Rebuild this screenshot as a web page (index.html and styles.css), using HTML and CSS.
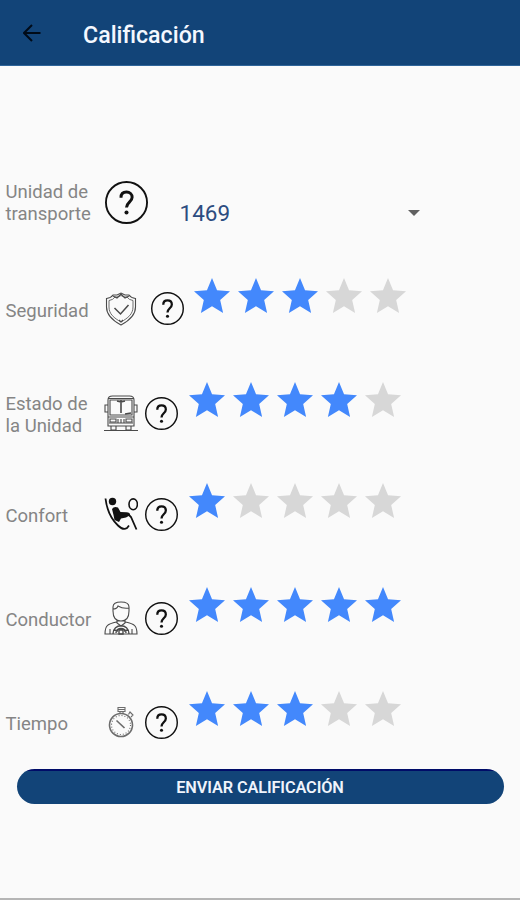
FILE: index.html
```html
<!DOCTYPE html>
<html lang="es">
<head>
<meta charset="utf-8">
<title>Calificación</title>
<link rel="stylesheet" href="styles.css">
</head>
<body>
<svg class="defs" width="0" height="0" aria-hidden="true">
  <symbol id="star" viewBox="2 2 20 19" preserveAspectRatio="none"><path d="M12 17.27 18.18 21l-1.64-7.03L22 9.24l-7.19-.61L12 2 9.19 8.63 2 9.24l5.46 4.73L5.82 21z"/></symbol>
  <symbol id="help" viewBox="0 0 32 32"><g fill="none" stroke="currentColor"><circle cx="16" cy="16" r="15.3" stroke-width="1.4"/><path d="M11.9 12.4C11.900 9.700 13.500 8.200 16 8.200s4.200 1.600 4.200 3.900c0 3.600-4.200 3.800-4.200 7.700" stroke-width="2.200"/></g><circle cx="16" cy="23.500" r="1.500" fill="currentColor"/></symbol>
</svg>
<header class="bar">
  <svg class="back" viewBox="0 0 18 18"><path d="M17.5 9H1.5M9 1 1 9l8 8"/></svg>
  <h1>Calificación</h1>
</header>
<main>
  <div class="row unit">
    <span class="label">Unidad de<br>transporte</span>
    <svg class="help big"><use href="#help"/></svg>
    <div class="select"><span>1469</span><i class="caret"></i></div>
  </div>
  <div class="row safety">
    <span class="label">Seguridad</span>
    <svg class="icon" viewBox="0 0 34 34"><g class="line"><path d="M2.5 6.5Q7 6 9 3h4l4-2 4 2h4q2 3 6.500 3.500V15c0 9-7 14-14.500 18C9.500 29 2.500 24 2.500 15z"/><path d="M5 8.500Q9 8 11 5h3l3-1.500L20 5h3q2 3 6 3.500V15c0 7-5 11-12 15C10 26 5 22 5 15z" stroke-width=".8"/><path d="m10.500 16 6 6 8-9" stroke-width="1.500"/></g><path d="m9 4 4 2 4-4 4 4 4-2M15 28l2 2 2-2" class="line"/></svg>
    <svg class="help"><use href="#help"/></svg>
    <div class="stars"><svg class="on"><use href="#star"/></svg><svg class="on"><use href="#star"/></svg><svg class="on"><use href="#star"/></svg><svg><use href="#star"/></svg><svg><use href="#star"/></svg></div>
  </div>
  <div class="row state">
    <span class="label">Estado de<br>la Unidad</span>
    <svg class="icon" viewBox="0 0 34 36"><g class="line"><path d="M4 31V5Q4 1 8.500 1h17Q30 1 30 5v26zM6 20V5h22v15zM4.500 3.500h25M4.500 22h25M5 28h24M7 31v4h5v-4M22 31v4h5v-4M0 35.500h34"/><path d="M4 10H1v7h3M30 10h3v7h-3M6 24h6v3H6zM22 24h6v3h-6zM14 24v4M17 24v4M20 24v4"/><path d="M17 5v13M13 6l4 1 4-1M21 19l6-1" stroke-width="1.600"/></g></svg>
    <svg class="help"><use href="#help"/></svg>
    <div class="stars"><svg class="on"><use href="#star"/></svg><svg class="on"><use href="#star"/></svg><svg class="on"><use href="#star"/></svg><svg class="on"><use href="#star"/></svg><svg><use href="#star"/></svg></div>
  </div>
  <div class="row comfort">
    <span class="label">Confort</span>
    <svg class="icon solid" viewBox="0 0 34 34"><circle cx="8.500" cy="4.500" r="3.700"/><path d="M8 12q2-3 6-1.500l2.500 4.500 6 .200q4 .500 3.500 3l-4 2.300-5 1-2 3.500-4.500-2-1-5z"/><g fill="none" stroke="currentColor"><path d="M1.500 1.500C3 14 7 22 14 28.500q5 5 9 2.500l2-2.500" stroke-width="1.800"/><path d="m24 17 3 3 5.500 12.500" stroke-width="1.800"/><ellipse cx="29.200" cy="7.300" rx="4.200" ry="5.400" stroke-width="1.600"/></g></svg>
    <svg class="help"><use href="#help"/></svg>
    <div class="stars"><svg class="on"><use href="#star"/></svg><svg><use href="#star"/></svg><svg><use href="#star"/></svg><svg><use href="#star"/></svg><svg><use href="#star"/></svg></div>
  </div>
  <div class="row driver">
    <span class="label">Conductor</span>
    <svg class="icon" viewBox="0 0 34 34"><g class="line"><path d="M9 10V6q0-5 8-5t8 5v4q0 10-8 10T9 10zM9 8q4 0 5-3 5 3 11 2M13 19v3l4 3 4-3v-3M12.500 21C4 23 1 24 1 33h32c0-9-3-10-11.500-12M6 28v5M28 28v5"/><path d="M9 33c0-11 16-11 16 0M12 32c0-6 10-6 10 0M10 29l4 1M24 29l-4 1M15 29h4v4h-4z" stroke-width="1.400"/></g></svg>
    <svg class="help"><use href="#help"/></svg>
    <div class="stars"><svg class="on"><use href="#star"/></svg><svg class="on"><use href="#star"/></svg><svg class="on"><use href="#star"/></svg><svg class="on"><use href="#star"/></svg><svg class="on"><use href="#star"/></svg></div>
  </div>
  <div class="row time">
    <span class="label">Tiempo</span>
    <svg class="icon" viewBox="0 0 34 34"><g class="line"><circle cx="17" cy="20" r="11.500" stroke-width="1.600"/><circle cx="17" cy="20" r="9.500" stroke-dasharray="1 2"/><path d="M14 2.500h7v4h-7zM16 6.500v2M19 6.500v2M14 4.500h7M24.500 9.500 26 7l3 3-2 2"/><path d="m12.500 15.500 8 7.500" stroke-width="1.700"/></g></svg>
    <svg class="help"><use href="#help"/></svg>
    <div class="stars"><svg class="on"><use href="#star"/></svg><svg class="on"><use href="#star"/></svg><svg class="on"><use href="#star"/></svg><svg><use href="#star"/></svg><svg><use href="#star"/></svg></div>
  </div>
  <button class="send">ENVIAR CALIFICACIÓN</button>
</main>
</body>
</html>
```
FILE: styles.css
```css
* { box-sizing: border-box; }
body {
  margin: 0;
  height: 900px;
  display: flex;
  flex-direction: column;
  background: #fafafa;
  border-bottom: 2px solid #b5b5b5;
  font-family: Roboto, "Liberation Sans", sans-serif;
}
.defs { display: none; }
svg { display: block; flex: none; }
.bar {
  height: 66px;
  display: flex;
  align-items: center;
  padding: 1px 0 0 23px;
  background: #124478;
  border-bottom: 1px solid #2f659a;
}
.back { width: 18px; height: 18px; fill: none; stroke: #000b18; stroke-width: 2; }
h1 {
  margin: 3px 0 0 42px;
  color: #f4f8ff;
  font-size: 23.200px;
  font-weight: 500;
  line-height: 28px;
}
main { display: flex; flex-direction: column; padding-top: 114px; }
.row { display: flex; align-items: center; height: 44px; padding-left: 5.500px; }
.safety { margin-top: 62.500px; }
.state { margin-top: 60.500px; }
.comfort { margin-top: 57px; }
.driver, .time { margin-top: 60px; }
.label {
  width: 98.500px;
  padding-top: 3px;
  color: #858585;
  font-size: 18.500px;
  line-height: 22px;
}
.unit .label { padding-top: 2px; }
.safety .label { padding-top: 4px; }
.icon { width: 34px; height: 34px; color: #111; margin-right: 7px; }
.line { fill: none; stroke: #4a4a4a; stroke-width: 1.100; }
.time .line { stroke: #6c6c6c; }
.safety .icon { margin-right: 13px; }
.state .icon { height: 36px; }
.solid { fill: currentColor; }
.help { width: 33px; height: 33px; color: #111; }
.big { width: 43px; height: 43px; margin-left: 1px; }
.stars { display: flex; gap: 8px; margin: 0 0 27px 10.500px; }
.stars svg { width: 36px; height: 35px; fill: #d7d7d7; }
.stars .on { fill: #4388fc; }
.safety .stars { margin-bottom: 26px; margin-left: 10px; }
.select {
  display: flex;
  align-items: center;
  justify-content: space-between;
  width: 240px;
  margin: 22px 0 0 31.500px;
  color: #2c4c80;
  font-size: 22.500px;
}
.caret { border: 6px solid transparent; border-top-color: #606060; border-bottom: 0; }
.send {
  height: 35px;
  margin: 24.500px 16.500px 0;
  border: 0;
  border-radius: 18px;
  background: linear-gradient(#000c68 2px, #124478 2.500px);
  color: #f0f4fc;
  font: 600 16.300px/36px Roboto, "Liberation Sans", sans-serif;
  letter-spacing: -.1px;
  padding: 1px 0 0;
}
```
